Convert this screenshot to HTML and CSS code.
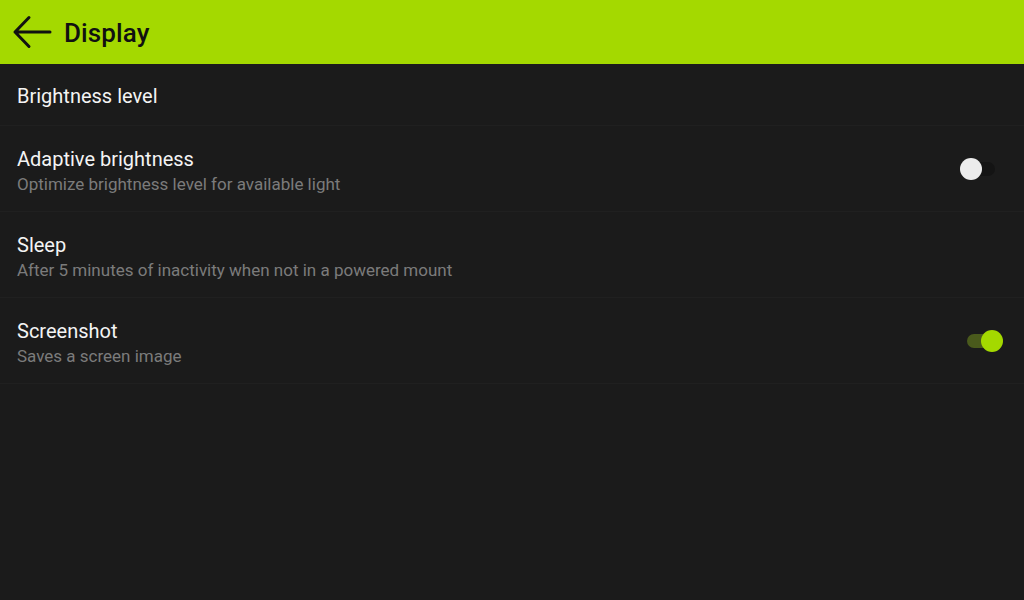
FILE: index.html
```html
<!DOCTYPE html>
<html>
<head>
<meta charset="utf-8">
<link rel="stylesheet" href="styles.css">
</head>
<body>
<header class="bar">
  <svg class="back" width="40" height="34" viewBox="0 0 40 34">
    <path d="M38 17 H3 M17 2.5 L3 17 L17 31.5" fill="none" stroke="#111" stroke-width="3" stroke-linecap="round" stroke-linejoin="round"/>
  </svg>
  <h1 class="title">Display</h1>
</header>
<main class="list">
  <div class="row row-single">
    <div class="text"><div class="name">Brightness level</div></div>
  </div>
  <div class="row">
    <div class="text">
      <div class="name">Adaptive brightness</div>
      <div class="desc">Optimize brightness level for available light</div>
    </div>
    <div class="switch off"><span class="track"></span><span class="thumb"></span></div>
  </div>
  <div class="row">
    <div class="text">
      <div class="name">Sleep</div>
      <div class="desc">After 5 minutes of inactivity when not in a powered mount</div>
    </div>
  </div>
  <div class="row">
    <div class="text">
      <div class="name">Screenshot</div>
      <div class="desc">Saves a screen image</div>
    </div>
    <div class="switch on"><span class="track"></span><span class="thumb"></span></div>
  </div>
</main>
</body>
</html>
```
FILE: styles.css
```css
html, body {
  margin: 0;
  padding: 0;
  background: #1b1b1b;
  font-family: Roboto, "Noto Sans", sans-serif;
  width: 1024px;
  height: 600px;
  overflow: hidden;
}
.bar {
  height: 64px;
  background: #a4d900;
  display: flex;
  align-items: center;
  padding-left: 12px;
  box-sizing: border-box;
}
.back {
  display: block;
  margin-top: -1px;
}
.title {
  margin: 2px 0 0 12px;
  font-size: 26px;
  font-weight: 500;
  color: #111;
  letter-spacing: 0.1px;
}
.list {
  display: flex;
  flex-direction: column;
}
.row {
  height: 86px;
  display: flex;
  align-items: center;
  justify-content: space-between;
  padding: 4px 28px 0 17px;
  border-bottom: 1px solid #202020;
  box-sizing: border-box;
}
.row-single {
  height: 62px;
  padding-top: 2px;
}
.text {
  display: flex;
  flex-direction: column;
}
.name {
  color: #f4f4f4;
  font-size: 20px;
  line-height: 26px;
}
.desc {
  color: #7b7b7b;
  font-size: 17px;
  line-height: 24px;
}
.switch {
  position: relative;
  width: 36px;
  height: 22px;
  margin-top: -4px;
}
.switch .track {
  position: absolute;
  left: 1px;
  top: 4px;
  width: 34px;
  height: 14px;
  border-radius: 7px;
}
.switch .thumb {
  position: absolute;
  top: 0;
  width: 22px;
  height: 22px;
  border-radius: 50%;
}
.switch.off .track { background: #141414; }
.switch.off .thumb { left: 0; background: #ececec; }
.switch.on .track { background: #4a5a1c; left: 7px; }
.switch.on .thumb { left: 21px; background: #a4d900; }
```
